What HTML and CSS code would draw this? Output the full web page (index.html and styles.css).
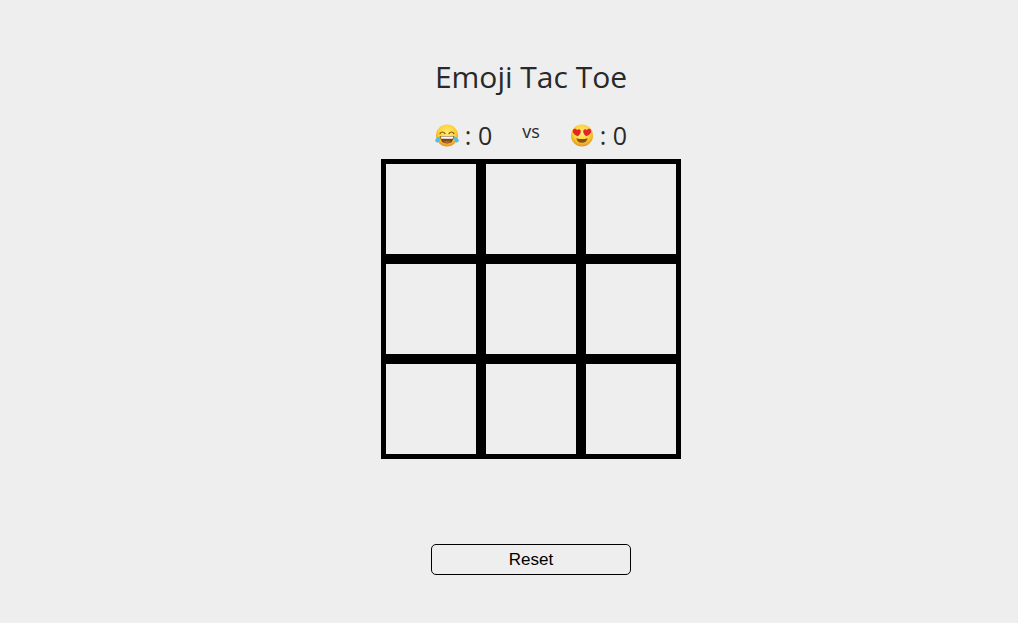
FILE: index.html
```html
<!DOCTYPE html>
<html lang="en">
<head>
<meta charset="utf-8">
<title>Emoji Tac Toe</title>
<link rel="stylesheet" href="styles.css">
</head>
<body>
<main class="game">
  <h1 class="title">Emoji Tac Toe</h1>
  <div class="scores">
    <p class="score">
      <svg class="emoji" viewBox="0 -1 24 24" role="img" aria-label="Tears of joy">
        <defs>
          <radialGradient id="face" cx="50%" cy="38%" r="65%">
            <stop offset="0" stop-color="#fff07a"/>
            <stop offset=".6" stop-color="#fdd033"/>
            <stop offset="1" stop-color="#e08a1c"/>
          </radialGradient>
        </defs>
        <circle cx="12" cy="11.500" r="11" fill="url(#face)"/>
        <path d="M5 9.500Q7.500 6.500 10 9.500M14 9.500Q16.500 6.500 19 9.500" fill="none" stroke="#8a5212" stroke-width="1.200" stroke-linecap="round"/>
        <path d="M5 12H19Q18.500 19.500 12 19.500Q5.500 19.500 5 12Z" fill="#7d4614"/>
        <path d="M5.700 12.500H18.300L17.700 14.700H6.300Z" fill="#fff"/>
        <path d="M8 17.800Q12 15.800 16 17.800Q12 20.300 8 17.800Z" fill="#b5652a"/>
        <path d="M5 12.300Q5.200 18 2.600 18.500Q-.4 18.600 .4 15.600Q1.500 13.500 5 12.300ZM19 12.300Q18.800 18 21.400 18.500Q24.400 18.600 23.600 15.600Q22.500 13.500 19 12.300Z" fill="#4fbcf2"/>
      </svg>
      <span>: 0</span>
    </p>
    <p class="versus">vs</p>
    <p class="score">
      <svg class="emoji" viewBox="0 -1 24 24" role="img" aria-label="Heart eyes">
        <circle cx="12" cy="11.500" r="11" fill="url(#face)"/>
        <path d="M7.600 12.200C4 10.700 2.300 8.700 2.800 6.600C3.300 4.400 6 4.200 7 6.200C8.500 4.500 11 5.400 10.800 7.700C10.600 9.700 9 11.200 7.600 12.200Z" fill="#e3242b"/>
        <path d="M16.400 12.200C20 10.700 21.700 8.700 21.200 6.600C20.700 4.400 18 4.200 17 6.200C15.500 4.500 13 5.400 13.200 7.700C13.400 9.700 15 11.200 16.400 12.200Z" fill="#e3242b"/>
        <path d="M6.200 14.200Q12 16 17.800 14.200Q16.500 18.800 12 18.800Q7.500 18.800 6.200 14.200Z" fill="#86500f"/>
      </svg>
      <span>: 0</span>
    </p>
  </div>
  <div class="board">
    <button class="cell" type="button" aria-label="Row 1, column 1"></button>
    <button class="cell" type="button" aria-label="Row 1, column 2"></button>
    <button class="cell" type="button" aria-label="Row 1, column 3"></button>
    <button class="cell" type="button" aria-label="Row 2, column 1"></button>
    <button class="cell" type="button" aria-label="Row 2, column 2"></button>
    <button class="cell" type="button" aria-label="Row 2, column 3"></button>
    <button class="cell" type="button" aria-label="Row 3, column 1"></button>
    <button class="cell" type="button" aria-label="Row 3, column 2"></button>
    <button class="cell" type="button" aria-label="Row 3, column 3"></button>
  </div>
  <button class="reset" type="button">Reset</button>
</main>
</body>
</html>
```
FILE: styles.css
```css
* {
  box-sizing: border-box;
}

body {
  margin: 0;
  background: #eee;
  color: #292929;
  font-family: "Open Sans", "Noto Sans", sans-serif;
}

.game {
  display: flex;
  flex-direction: column;
  align-items: center;
  padding: 56px 0 48px 44px;
}

.title {
  margin: 0;
  font-size: 30px;
  font-weight: 400;
  line-height: 42px;
}

.scores {
  display: flex;
  align-items: flex-start;
  gap: 30px;
  padding: 20px 0 7px;
}

.score {
  display: flex;
  align-items: center;
  gap: 6px;
  margin: 0;
  font-size: 25px;
  line-height: 34px;
}

.emoji {
  width: 24px;
  height: 24px;
}

.versus {
  margin: 0;
  font-size: 18px;
  line-height: 26px;
}

.board {
  display: grid;
  grid-template-columns: repeat(3, 100px);
  grid-auto-rows: 100px;
}

.cell {
  padding: 0;
  border: 5px solid #000;
  border-radius: 0;
  background: #eee;
}

.reset {
  width: 200px;
  margin-top: 85px;
  padding: 5px;
  border: 1px solid #000;
  border-radius: 5px;
  background: #eee;
  color: #000;
  font-family: "Liberation Sans", Arial, sans-serif;
  font-size: 17px;
  line-height: 19px;
}
```
